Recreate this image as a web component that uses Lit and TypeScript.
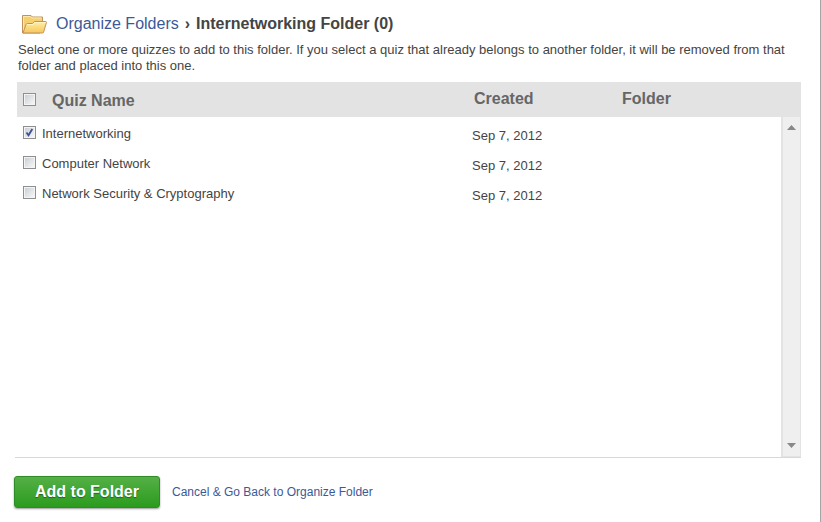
import { LitElement, html, css, svg } from "lit";
import { customElement, state } from "lit/decorators.js";

interface Quiz {
  id: string;
  name: string;
  created: string;
  folder: string;
  selected: boolean;
}

const folderIcon = svg`
  <defs>
    <linearGradient id="front" x1="0" y1="0" x2="0" y2="1">
      <stop offset="0" stop-color="#fff0a8" />
      <stop offset="0.5" stop-color="#fbdb80" />
      <stop offset="1" stop-color="#f6c65c" />
    </linearGradient>
  </defs>
  <path d="M1.5 19V1.500H10L11.500 3H21.500V9L19 19Z" fill="#f5cf70" stroke="#c1935a" />
  <path d="M2.500 17V2.500H9.500L11 4H20.500" fill="none" stroke="#fdeaa6" />
  <path d="M2 19L5 10.500Q5.400 9.500 6.500 9.500H11.500L13.500 7.500H24.500Q25.700 7.500 25.400 8.600L22.500 18.500Q22.300 19 21.500 19Z" fill="url(#front)" stroke="#c1935a" />
  <path d="M6 10.500H12L14 8.500H24.300" fill="none" stroke="#fff6c4" />
`;

@customElement("app-root")
export class AppRoot extends LitElement {
  static styles = css`
    :host {
      display: block;
      box-sizing: border-box;
      min-height: 100vh;
      padding: 12px 19px 14px 14px;
      border-right: 1px solid #a5a5a5;
      background: #fff;
      color: #444;
      font: 13px/16px "Liberation Sans", Arial, sans-serif;
    }
    a {
      color: #3b5998;
      text-decoration: none;
    }
    .trail {
      display: flex;
      align-items: center;
      gap: 6px;
      margin: 0 0 6px 7px;
      font-size: 16px;
      line-height: 24px;
    }
    .trail svg {
      width: 26px;
      height: 20px;
      margin-right: 3px;
    }
    .trail span {
      font-weight: bold;
    }
    .trail h1 {
      margin: 0;
      font-size: 16px;
      line-height: 24px;
    }
    .hint {
      margin: 0 0 8px 4px;
    }
    .list {
      display: flex;
      min-height: 375px;
      margin-left: 1px;
      border-bottom: 1px solid #d8d8d8;
    }
    .grid {
      flex: 1;
      min-width: 0;
      margin-left: 2px;
    }
    table {
      width: 100%;
      table-layout: fixed;
      border-collapse: collapse;
    }
    .pick {
      width: 25px;
    }
    .name {
      width: 430px;
    }
    .created {
      width: 148px;
    }
    th,
    td {
      padding: 0;
      text-align: left;
      vertical-align: top;
    }
    th {
      height: 35px;
      box-sizing: border-box;
      padding: 8px 2px 0;
      background: #e3e3e3;
      color: #666;
      font-size: 16px;
      line-height: 18px;
    }
    th.pick {
      padding: 11px 0 0 6px;
      line-height: 13px;
    }
    th.name {
      padding: 10px 10px 0;
    }
    td {
      height: 30px;
      box-sizing: border-box;
      padding-top: 11px;
    }
    td.pick {
      padding: 9px 0 0 6px;
    }
    td.name {
      padding-top: 9px;
    }
    input {
      appearance: none;
      display: block;
      box-sizing: border-box;
      width: 13px;
      height: 13px;
      margin: 0;
      border: 1px solid #8e8f8f;
      background: linear-gradient(135deg, #cbcfd5, #f6f6f6) content-box, #f4f4f4;
      padding: 1px;
    }
    input:checked {
      background:
        url("data:image/svg+xml,%3Csvg xmlns='http://www.w3.org/2000/svg' viewBox='0 0 13 13'%3E%3Cpath d='M3.500 6.500L5.500 9.300L9.300 3' fill='none' stroke='%233c5199' stroke-width='1.800'/%3E%3C/svg%3E") border-box,
        linear-gradient(135deg, #cbcfd5, #f6f6f6) content-box,
        #f4f4f4;
    }
    .rail {
      display: flex;
      flex-direction: column;
      width: 20px;
    }
    .cap {
      height: 35px;
      background: #e3e3e3;
    }
    .track {
      flex: 1;
      display: flex;
      flex-direction: column;
      justify-content: space-between;
      box-sizing: border-box;
      padding: 7px 0 7px;
      border: solid #e3e3e3;
      border-width: 0 1px 1px 2px;
      background: #efefef;
    }
    .track button {
      display: flex;
      justify-content: center;
      padding: 0;
      border: 0;
      background: none;
    }
    .track svg {
      width: 9px;
      height: 6px;
    }
    .actions {
      display: flex;
      align-items: center;
      gap: 12px;
      margin-top: 18px;
      font-size: 12px;
    }
    .add {
      height: 32px;
      padding: 0 20px;
      border: 1px solid #2f8a28;
      border-radius: 3px;
      background: linear-gradient(#55b046, #2b9b1e);
      box-shadow: 0 1px 2px #0006;
      color: #fff;
      font: bold 16px/18px "Liberation Sans", Arial, sans-serif;
      text-shadow: 0 1px 1px #0006;
    }
  `;

  @state() private quizzes: Quiz[] = [
    { id: "q1", name: "Internetworking", created: "Sep 7, 2012", folder: "", selected: true },
    { id: "q2", name: "Computer Network", created: "Sep 7, 2012", folder: "", selected: false },
    { id: "q3", name: "Network Security & Cryptography", created: "Sep 7, 2012", folder: "", selected: false },
  ];

  private toggle(id: string) {
    this.quizzes = this.quizzes.map((q) => (q.id === id ? { ...q, selected: !q.selected } : q));
  }

  private toggleAll(e: Event) {
    const selected = (e.target as HTMLInputElement).checked;
    this.quizzes = this.quizzes.map((q) => ({ ...q, selected }));
  }

  render() {
    return html`
      <nav class="trail">
        <svg viewBox="0 0 26 20" aria-hidden="true">${folderIcon}</svg>
        <a href="#folders">Organize Folders</a>
        <span>›</span>
        <h1>Internetworking Folder (0)</h1>
      </nav>
      <p class="hint">
        Select one or more quizzes to add to this folder. If you select a quiz that already belongs to another folder, it will be removed from that<br />
        folder and placed into this one.
      </p>
      <section class="list">
        <div class="grid">
          <table>
            <thead>
              <tr>
                <th class="pick"><input id="all" type="checkbox" @change=${this.toggleAll} /></th>
                <th class="name"><label for="all">Quiz Name</label></th>
                <th class="created">Created</th>
                <th>Folder</th>
              </tr>
            </thead>
            <tbody>
              ${this.quizzes.map(
                (q) => html`
                  <tr>
                    <td class="pick">
                      <input id=${q.id} type="checkbox" .checked=${q.selected} @change=${() => this.toggle(q.id)} />
                    </td>
                    <td class="name"><label for=${q.id}>${q.name}</label></td>
                    <td class="created">${q.created}</td>
                    <td>${q.folder}</td>
                  </tr>
                `,
              )}
            </tbody>
          </table>
        </div>
        <div class="rail">
          <div class="cap"></div>
          <div class="track">
            <button aria-label="Scroll up">
              <svg viewBox="0 0 9 6"><path d="M0 6L4.500 1L9 6Z" fill="#888" /></svg>
            </button>
            <button aria-label="Scroll down">
              <svg viewBox="0 0 9 6"><path d="M0 0H9L4.500 5Z" fill="#888" /></svg>
            </button>
          </div>
        </div>
      </section>
      <footer class="actions">
        <button class="add">Add to Folder</button>
        <a href="#folders">Cancel &amp; Go Back to Organize Folder</a>
      </footer>
    `;
  }
}
